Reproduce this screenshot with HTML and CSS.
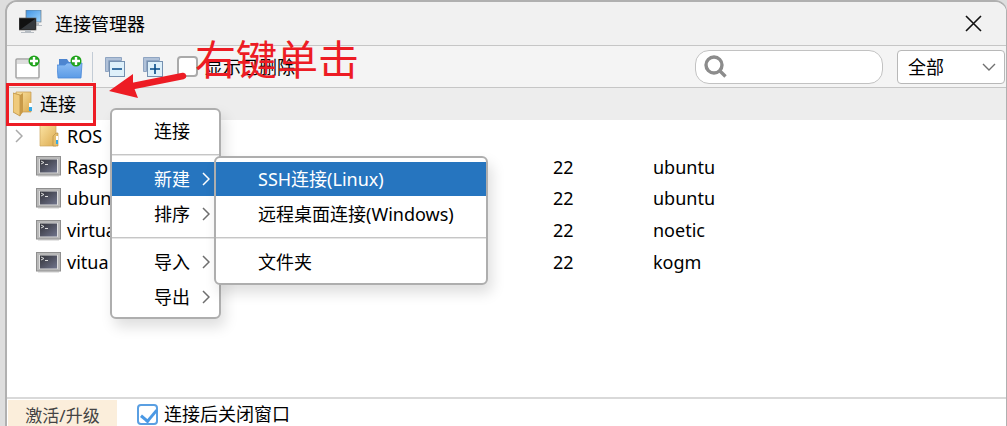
FILE: index.html
```html
<!DOCTYPE html>
<html lang="zh-CN">
<head>
<meta charset="utf-8">
<title>连接管理器</title>
<link rel="stylesheet" href="styles.css">
</head>
<body>
<svg class="defs" aria-hidden="true">
  <defs>
    <linearGradient id="gold" x1="0" y1="0" x2="1" y2="1"><stop offset="0" stop-color="#fbe3a3"/><stop offset="1" stop-color="#dcab50"/></linearGradient>
    <linearGradient id="blue" x1="0" y1="0" x2="1" y2="1"><stop offset="0" stop-color="#3f92e2"/><stop offset="1" stop-color="#9fd6ff"/></linearGradient>
    <linearGradient id="folderblue" x1="0" y1="0" x2="0" y2="1"><stop offset="0" stop-color="#8bbcf3"/><stop offset="1" stop-color="#5b9be6"/></linearGradient>
    <linearGradient id="screen" x1="0" y1="0" x2="1" y2="1"><stop offset="0" stop-color="#33343a"/><stop offset="1" stop-color="#70748c"/></linearGradient>
    <symbol id="plus-badge" viewBox="0 0 12 12">
      <circle cx="6" cy="6" r="5.5" fill="#1fa31b"/><path d="M6 2v8M2 6h8" stroke="#fff" stroke-width="2.4"/>
    </symbol>
    <symbol id="terminal" viewBox="0 0 25 21">
      <rect x="2" y="19" width="21" height="2" fill="#e6e6e6"/>
      <rect x=".5" y=".5" width="24" height="18.5" fill="#b9b9b9" stroke="#8f8f8f"/>
      <rect x="3" y="3" width="19" height="14" fill="#dedede"/>
      <rect x="4" y="3.5" width="17" height="13" fill="url(#screen)"/>
      <path d="M5 5l3 1.5L5 8M9 8.5h3" fill="none" stroke="#ddd"/>
    </symbol>
    <symbol id="arrow" viewBox="0 0 8 14"><path d="M1 1l6 6-6 6" fill="none" stroke="currentColor" stroke-width="1.5"/></symbol>
  </defs>
</svg>

<main class="window">
  <header class="titlebar">
    <svg class="app-icon" width="24" height="24" viewBox="0 0 24 24">
      <rect x="7" y="0" width="15" height="12" fill="url(#blue)" stroke="#6c7882" stroke-width=".7"/>
      <path d="M17 13h3v2h3v1h-7z" fill="#b6bcc2"/>
      <rect x="0" y="8" width="17" height="12" fill="#111" stroke="#666" stroke-width=".7"/>
      <path d="M2 19L16 9v10z" fill="#34383c"/>
      <path d="M6 20h6v2h3v1H2v-1h4z" fill="#b6bcc2"/>
    </svg>
    <h1 class="title">连接管理器</h1>
    <button class="close" aria-label="关闭"><svg width="17" height="17" viewBox="0 0 17 17"><path d="M1 1l15 15M16 1L1 16" stroke="#111" stroke-width="1.6"/></svg></button>
  </header>

  <div class="toolbar">
    <button class="tool" aria-label="新建连接">
      <svg width="26" height="26" viewBox="0 0 26 26">
        <rect x="1" y="5" width="23" height="19" rx="1" fill="#fff" stroke="#a3a3a3" stroke-width="1.5"/>
        <path d="M2 6h21v4H2z" fill="#dedede"/><path d="M2 25h22" stroke="#ccc"/>
        <use href="#plus-badge" x="13" y="1" width="12" height="12"/>
      </svg>
    </button>
    <button class="tool" aria-label="新建文件夹">
      <svg width="26" height="26" viewBox="0 0 26 26">
        <path d="M2 21V5h8l2 3h11v14z" fill="#4d85cf"/>
        <path d="M0 11h8l2-2h15l-1 15H1z" fill="url(#folderblue)" stroke="#4a88d8" stroke-width=".8"/>
        <use href="#plus-badge" x="13" y="1" width="12" height="12"/>
      </svg>
    </button>
    <span class="divider"></span>
    <button class="tool tree" aria-label="全部折叠">
      <svg width="20" height="20" viewBox="0 0 20 20">
        <path d="M.5 14.5V.5h16v3h-13v11z" fill="#b0c1d8" stroke="#8fa5c2"/>
        <rect x="4.500" y="4.500" width="15" height="15" fill="#def0fa" stroke="#7590b0"/><path d="M7 12h10" stroke="#064a87" stroke-width="1.6"/>
      </svg>
    </button>
    <button class="tool tree" aria-label="全部展开">
      <svg width="20" height="20" viewBox="0 0 20 20">
        <path d="M.5 14.5V.5h16v3h-13v11z" fill="#b0c1d8" stroke="#8fa5c2"/>
        <rect x="4.500" y="4.500" width="15" height="15" fill="#def0fa" stroke="#7590b0"/><path d="M7 12h10M12 7v10" stroke="#064a87" stroke-width="1.6"/>
      </svg>
    </button>
    <label class="check"><input class="box" type="checkbox">显示已删除</label>
    <div class="search">
      <svg width="23" height="23" viewBox="0 0 23 23"><circle cx="10" cy="10" r="8" fill="none" stroke="#8c8c8c" stroke-width="3.4"/><path d="M15 15l6.500 6.500" stroke="#8c8c8c" stroke-width="3.400"/></svg>
      <input class="search-input" type="search" aria-label="搜索">
    </div>
    <div class="filter">
      <select class="filter-select" aria-label="筛选"><option>全部</option></select>
      <svg class="filter-chevron" width="14" height="8" viewBox="0 0 14 8"><path d="M1 1l6 6 6-6" fill="none" stroke="#707070" stroke-width="1.4"/></svg>
    </div>
  </div>

  <section class="tree-root">
    <svg width="20" height="26" viewBox="0 0 20 26">
      <path d="M3 1h15v20H3z" fill="url(#gold)" stroke="#c49a4d" stroke-width=".7"/>
      <path d="M16 12h3v7h-3z" fill="#fff"/><path d="M16 16h3v4h-3z" fill="#35a9e6"/>
      <path d="M0 2l7 2v21l-7-4z" fill="#efca7c" stroke="#bd9040" stroke-width=".8"/>
      <path d="M7 4l3-2v19l-3 4z" fill="#c99a48"/>
    </svg>
    <span>连接</span>
  </section>

  <div class="list">
    <table class="hosts">
      <colgroup><col class="col-name"><col class="col-port"><col></colgroup>
      <tbody>
        <tr><td><div class="name"><svg class="expander" width="8" height="14"><use href="#arrow"/></svg>
          <svg class="node-icon" width="25" height="22" viewBox="0 0 25 22"><path d="M4 0h16v21H4z" fill="url(#gold)" stroke="#cda75f" stroke-width=".7"/><path d="M17 21V11l3-3h2v13z" fill="#e4bd6b" stroke="#b48b41" stroke-width=".6"/><path d="M20 11h2v4h-2z" fill="#fff"/><path d="M20 15h2v4h-2z" fill="#35a9e6"/></svg>ROS</div></td><td></td><td></td></tr>
        <tr><td><div class="name"><svg class="node-icon" width="25" height="21"><use href="#terminal"/></svg>Rasp</div></td><td>22</td><td>ubuntu</td></tr>
        <tr><td><div class="name"><svg class="node-icon" width="25" height="21"><use href="#terminal"/></svg>ubuntu</div></td><td>22</td><td>ubuntu</td></tr>
        <tr><td><div class="name"><svg class="node-icon" width="25" height="21"><use href="#terminal"/></svg>virtua</div></td><td>22</td><td>noetic</td></tr>
        <tr><td><div class="name"><svg class="node-icon" width="25" height="21"><use href="#terminal"/></svg>vitua</div></td><td>22</td><td>kogm</td></tr>
      </tbody>
    </table>
  </div>

  <footer class="footer">
    <button class="upgrade">激活/升级</button>
    <label class="check"><input class="box" type="checkbox" checked>连接后关闭窗口</label>
  </footer>
</main>

<ul class="menu context">
  <li class="entry"><button class="item">连接</button></li>
  <li class="rule"></li>
  <li class="entry">
    <button class="item active">新建<svg width="8" height="14"><use href="#arrow"/></svg></button>
    <ul class="menu submenu">
      <li class="entry"><button class="item active">SSH连接(Linux)</button></li>
      <li class="entry"><button class="item">远程桌面连接(Windows)</button></li>
      <li class="rule"></li>
      <li class="entry"><button class="item">文件夹</button></li>
    </ul>
  </li>
  <li class="entry"><button class="item">排序<svg width="8" height="14"><use href="#arrow"/></svg></button></li>
  <li class="rule"></li>
  <li class="entry"><button class="item">导入<svg width="8" height="14"><use href="#arrow"/></svg></button></li>
  <li class="entry"><button class="item">导出<svg width="8" height="14"><use href="#arrow"/></svg></button></li>
</ul>

<div class="mark-box"></div>
<svg class="mark-arrow" width="80" height="30" viewBox="0 0 80 30"><path d="M74 5L24 15" stroke="#ed1c24" stroke-width="6.500" stroke-linecap="round"/><path d="M0 20L24 3l0 11 5 13z" fill="#ed1c24"/></svg>
<div class="mark-text">右键单击</div>
</body>
</html>
```
FILE: styles.css
```css
* { box-sizing: border-box; }

body {
  margin: 0;
  height: 100vh;
  overflow: hidden;
  background: #dedede;
  color: #000;
  font: 18px/24px "Noto Sans", "Noto Sans CJK SC", sans-serif;
}

button, input, select {
  margin: 0;
  padding: 0;
  border: 0;
  background: none;
  color: inherit;
  font: inherit;
}

.defs { position: absolute; width: 0; height: 0; }

.window {
  display: flex;
  flex-direction: column;
  height: 100vh;
  margin-left: 5px;
  border: 2px solid #b0b0b0;
  border-right-width: 1px;
  border-bottom: 0;
  border-radius: 12px 12px 0 0;
  background: #fff;
  overflow: hidden;
}

.titlebar {
  display: flex;
  align-items: center;
  gap: 12px;
  height: 44px;
  padding: 0 24px 0 12px;
  border-bottom: 1px solid #c6c6c6;
  background: #f1f1f1;
}
.app-icon { margin-bottom: 3px; }
.title { flex: 1; margin: 0; font-size: 18px; font-weight: 400; }
.close { display: flex; }

.toolbar {
  display: flex;
  align-items: center;
  height: 42px;
  padding: 0 2px 0 8px;
  border-bottom: 1px solid #c6c6c6;
  background: #f4f4f4;
}
.tool { display: flex; margin-right: 16px; }
.tree { margin-right: 18px; }
.divider { width: 1px; height: 30px; margin: 0 12px 0 -7px; background: #c3ccd6; }

.check { display: flex; align-items: center; gap: 7px; }
.box {
  appearance: none;
  width: 21px;
  height: 21px;
  border: 2px solid #aaa;
  border-radius: 4px;
  background: #fff;
}
.toolbar .check { margin-left: -4px; }
.box:checked { position: relative; border-color: #5a9fe2; }
.box:checked::after {
  content: "";
  position: absolute;
  left: 5px;
  top: 0;
  width: 7px;
  height: 13px;
  border: solid #4a98e4;
  border-width: 0 3px 3px 0;
  transform: rotate(40deg);
}

.search {
  display: flex;
  align-items: center;
  width: 188px;
  height: 34px;
  margin-left: auto;
  padding: 0 8px;
  border: 1px solid #c2c2c2;
  border-radius: 14px;
  background: #fff;
}
.search-input { flex: 1; min-width: 0; outline: 0; }

.filter { position: relative; width: 108px; margin-left: 14px; }
.toolbar { padding-right: 1px; }
.filter-select {
  appearance: none;
  width: 100%;
  height: 34px;
  padding: 0 10px;
  border: 1px solid #b8b8b8;
  border-radius: 4px;
  background: #fff;
}
.filter-chevron { position: absolute; right: 9px; top: 13px; pointer-events: none; }

.tree-root {
  display: flex;
  align-items: center;
  gap: 7px;
  height: 32px;
  padding-left: 6px;
  background: #ededed;
}

.list { flex: 1; min-height: 0; }
.hosts { width: 100%; border-collapse: collapse; table-layout: fixed; }
.hosts tr { height: 32px; }
.hosts tr:nth-child(-n+2) { height: 31px; }
.hosts td { padding: 0; }
.col-name { width: 546px; }
.col-port { width: 100px; }
.name { display: flex; align-items: center; padding-left: 29px; }
.expander { margin: 0 13px 0 -21px; color: #aaa; }
.node-icon { margin-right: 6px; }

.footer {
  display: flex;
  align-items: flex-start;
  gap: 20px;
  height: 29px;
  padding-left: 1px;
  border-top: 2px solid #d9d9d9;
}
.upgrade {
  width: 109px;
  height: 32px;
  margin-top: 1px;
  background: #fbeedb;
  color: #444;
  font-size: 17px;
}
.footer .check { gap: 6px; padding-top: 3px; }

.menu {
  display: flex;
  flex-direction: column;
  gap: 1px;
  margin: 0;
  padding: 4px 0 3px;
  border: 2px solid #aeaeae;
  border-radius: 6px;
  background: #fff;
  box-shadow: 4px 8px 14px rgba(0, 0, 0, 0.13);
  list-style: none;
}
.context { position: absolute; left: 110px; top: 108px; width: 111px; }
.submenu { position: absolute; left: 102px; top: 46px; width: 274px; padding-bottom: 4px; }
.rule { height: 2px; margin: 5px 0; border-top: 1px solid #c6c6c6; background: #e6e6e6; }
.item {
  display: flex;
  align-items: center;
  justify-content: space-between;
  width: 100%;
  height: 34px;
  padding: 0 9px 0 42px;
  white-space: nowrap;
}
.item svg { color: #6e6e6e; }
.active, .active svg { background: #2675bf; color: #fff; }

.mark-box {
  position: absolute;
  left: 6px;
  top: 83px;
  width: 90px;
  height: 43px;
  border: 3px solid #ed1c24;
}
.mark-arrow { position: absolute; left: 109px; top: 71px; }
.mark-text {
  position: absolute;
  left: 195px;
  top: 35px;
  color: #ed1c24;
  font-size: 41px;
  line-height: 48px;
}
```
